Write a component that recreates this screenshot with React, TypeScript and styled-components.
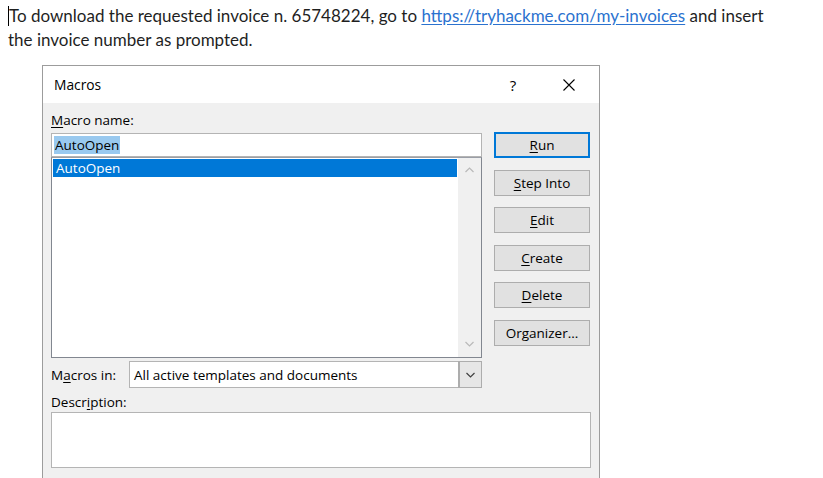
import React from "react";
import styled, { createGlobalStyle } from "styled-components";

const Global = createGlobalStyle`
  html, body { margin: 0; padding: 0; background: #ffffff; overflow: hidden; }
  body { width: 823px; height: 478px; }
`;

const Page = styled.div`
  width: 823px;
  height: 478px;
  display: flex;
  flex-direction: column;
  overflow: hidden;
`;

const Para = styled.p`
  margin: 0;
  padding: 4px 0 0 8px;
  font-family: "Lato", "Open Sans", sans-serif;
  font-size: 17px;
  line-height: 24px;
  color: #1f1f1f;
  width: 800px;
  white-space: nowrap;
`;

const Caret = styled.span`
  display: inline-block;
  width: 1px;
  height: 20px;
  background: #000;
  vertical-align: -4px;
`;

const Link = styled.span`
  color: #2b72cf;
  text-decoration: underline;
  text-underline-offset: 2px;
`;

const Dialog = styled.div`
  margin: 13px 0 0 42px;
  width: 556px;
  flex: 1;
  border: 1px solid #9c9c9c;
  border-bottom: none;
  background: #f0f0f0;
  display: flex;
  flex-direction: column;
  font-family: "Open Sans", "Noto Sans", sans-serif;
  font-size: 13.5px;
  color: #000;
`;

const TitleBar = styled.div`
  height: 37px;
  background: #ffffff;
  display: flex;
  align-items: center;
  padding: 0 0 0 11px;
`;

const Title = styled.div`
  flex: 1;
  font-size: 13.8px;
  color: #000;
`;

const HelpBtn = styled.div`
  width: 20px;
  text-align: center;
  font-size: 15px;
  margin-right: 39px;
`;

const CloseBtn = styled.div`
  width: 14px;
  height: 14px;
  margin-right: 23px;
  display: flex;
  align-items: center;
  justify-content: center;
`;

const Body = styled.div`
  padding: 0 8px 0 8px;
  display: flex;
  flex-direction: column;
`;

const Top = styled.div`
  display: flex;
  gap: 12px;
`;

const LeftCol = styled.div`
  width: 431px;
  display: flex;
  flex-direction: column;
`;

const RightCol = styled.div`
  width: 97px;
  padding-top: 29px;
  display: flex;
  flex-direction: column;
  gap: 11.5px;
`;

const Label = styled.div<{ $top?: number; $bottom?: number }>`
  line-height: 17px;
  padding-top: ${(p) => p.$top ?? 0}px;
  margin-bottom: ${(p) => p.$bottom ?? 0}px;
  color: #000;
  white-space: nowrap;
`;

const U = styled.span`
  text-decoration: underline;
  text-underline-offset: 2px;
`;

const NameInput = styled.div`
  height: 22px;
  border: 1px solid #b4b4b4;
  background: #fff;
  display: flex;
  align-items: center;
  padding-left: 2px;
`;

const Sel = styled.span`
  background: #99c9ef;
  padding: 0 1px;
  line-height: 18px;
`;

const List = styled.div`
  height: 199px;
  border: 1px solid #828790;
  border-top-color: #9a9ea6;
  background: #fff;
  display: flex;
`;

const Items = styled.div`
  flex: 1;
  padding: 1px;
`;

const Item = styled.div<{ $selected?: boolean }>`
  height: 18px;
  line-height: 18px;
  padding-left: 3px;
  background: ${(p) => (p.$selected ? "#0078d7" : "transparent")};
  color: ${(p) => (p.$selected ? "#fff" : "#000")};
`;

const Scroll = styled.div`
  width: 23px;
  background: #f0f0f0;
  display: flex;
  flex-direction: column;
  justify-content: space-between;
  align-items: center;
  padding: 9px 0 10px;
`;

const Row = styled.div`
  display: flex;
  align-items: center;
  margin-top: 3px;
`;

const RowLabel = styled.div`
  width: 78px;
  white-space: nowrap;
`;

const Select = styled.div`
  flex: 1;
  height: 25px;
  border: 1px solid #b4b4b4;
  background: #fff;
  display: flex;
  align-items: stretch;
`;

const SelectText = styled.div`
  flex: 1;
  padding-left: 4px;
  display: flex;
  align-items: center;
`;

const DropBtn = styled.div`
  width: 21px;
  background: #e6e6e6;
  border-left: 1px solid #adadad;
  display: flex;
  align-items: center;
  justify-content: center;
  outline: 1px solid #adadad;
`;

const Button = styled.div<{ $default?: boolean }>`
  width: 96px;
  height: 26px;
  box-sizing: border-box;
  background: #e1e1e1;
  border: ${(p) => (p.$default ? "2px solid #0078d7" : "1px solid #adadad")};
  display: flex;
  align-items: center;
  justify-content: center;
  color: #000;
`;

const DescBox = styled.div`
  height: 54px;
  border: 1px solid #b4b4b4;
  background: #fff;
`;

const Chevron = ({ up, color }: { up?: boolean; color: string }) => (
  <svg width="9" height="6" viewBox="0 0 9 6">
    <path
      d={up ? "M0.5 5 L4.5 1 L8.5 5" : "M0.5 1 L4.5 5 L8.5 1"}
      fill="none"
      stroke={color}
      strokeWidth="1.2"
    />
  </svg>
);

export default function App() {
  return (
    <Page>
      <Global />
      <Para>
        <Caret />
        To download the requested invoice n. 65748224, go to{" "}
        <Link>https://tryhackme.com/my-invoices</Link> and insert
        <br />
        the invoice number as prompted.
      </Para>
      <Dialog>
        <TitleBar>
          <Title>Macros</Title>
          <HelpBtn>?</HelpBtn>
          <CloseBtn>
            <svg width="12" height="12" viewBox="0 0 12 12">
              <path d="M0.5 0.5 L11.5 11.5 M11.5 0.5 L0.5 11.5" stroke="#000" strokeWidth="1.1" />
            </svg>
          </CloseBtn>
        </TitleBar>
        <Body>
          <Top>
            <LeftCol>
              <Label $top={9} $bottom={4}>
                <U>M</U>acro name:
              </Label>
              <NameInput>
                <Sel>AutoOpen</Sel>
              </NameInput>
              <List>
                <Items>
                  <Item $selected>AutoOpen</Item>
                </Items>
                <Scroll>
                  <Chevron up color="#b9b9b9" />
                  <Chevron color="#b9b9b9" />
                </Scroll>
              </List>
              <Row>
                <RowLabel>
                  M<U>a</U>cros in:
                </RowLabel>
                <Select>
                  <SelectText>All active templates and documents</SelectText>
                  <DropBtn>
                    <Chevron color="#404040" />
                  </DropBtn>
                </Select>
              </Row>
            </LeftCol>
            <RightCol>
              <Button $default>
                <U>R</U>un
              </Button>
              <Button>
                <U>S</U>tep Into
              </Button>
              <Button>
                <U>E</U>dit
              </Button>
              <Button>
                <U>C</U>reate
              </Button>
              <Button>
                <U>D</U>elete
              </Button>
              <Button>
                Or<U>g</U>anizer...
              </Button>
            </RightCol>
          </Top>
          <Label $top={6} $bottom={1}>
            Descr<U>i</U>ption:
          </Label>
          <DescBox />
        </Body>
      </Dialog>
    </Page>
  );
}
